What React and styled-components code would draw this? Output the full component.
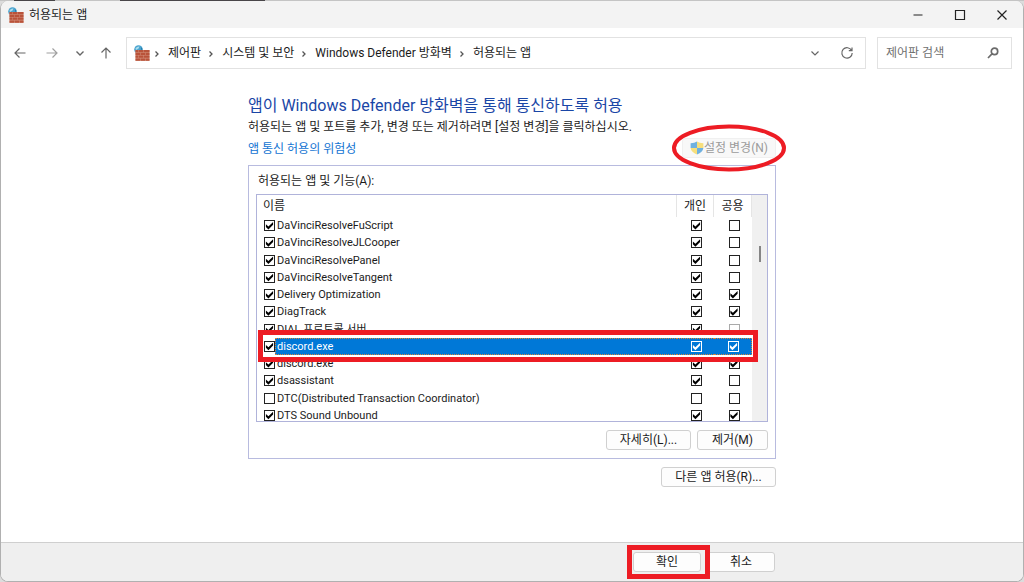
import React, { useState } from "react";
import styled, { createGlobalStyle, css } from "styled-components";

const GlobalStyle = createGlobalStyle`
	* {
		box-sizing: border-box;
	}
	body {
		margin: 0;
		background: #dcdcdc;
		font-family: Roboto, "Noto Sans CJK KR", sans-serif;
		font-size: 12px;
		line-height: 18px;
		color: #1b1b1b;
	}
	button,
	input {
		font: inherit;
		color: inherit;
	}
`;

const RED = "#ed1c24";

const Desktop = styled.div`
	min-height: 100vh;
	display: flex;
	padding: 1px 0 0;
	background: linear-gradient(
			90deg,
			#c4c4c4 14px,
			#484548 14px 55px,
			#c4c4c4 55px 120px,
			#484548 120px 265px,
			#c4c4c4 265px
		)
		top / 100% 1px no-repeat #dcdcdc;
`;

const Window = styled.div`
	flex: 1;
	display: flex;
	flex-direction: column;
	background: #fff;
	border: 1px solid #b0b0b0;
	border-top: 0;
	border-radius: 8px;
	overflow: hidden;
`;

const TitleBar = styled.header`
	display: flex;
	align-items: center;
	height: 27px;
	padding-left: 7px;
	background: #f3f3f3;
`;

const WindowTitle = styled.h1`
	flex: 1;
	margin: 0 0 0 5px;
	font-size: 12px;
	font-weight: 400;
`;

const CaptionButton = styled.button`
	display: flex;
	align-items: center;
	justify-content: center;
	width: 42px;
	height: 27px;
	padding: 0;
	border: 0;
	background: none;
	color: #222;
`;

const Toolbar = styled.nav`
	display: flex;
	align-items: center;
	height: 50px;
	padding: 0 11px 0 5px;
`;

const NavButton = styled.button`
	display: flex;
	align-items: center;
	justify-content: center;
	width: ${(props) => (props.$narrow ? "20px" : "28px")};
	height: 28px;
	margin-right: ${(props) => (props.$narrow ? "2px" : "4px")};
	padding: 0;
	border: 0;
	background: none;
	color: ${(props) => (props.disabled ? "#a0a0a0" : "#666")};
`;

const AddressBar = styled.div`
	flex: 1;
	display: flex;
	align-items: center;
	height: 32px;
	margin: 0 11px 0 2px;
	padding: 0 0 0 7px;
	border: 1px solid #e2e2e2;
`;

const Crumbs = styled.ol`
	flex: 1;
	display: flex;
	margin: 0 0 0 -3px;
	padding: 0;
	list-style: none;
`;

const Crumb = styled.li`
	display: flex;
	align-items: center;
`;

const CrumbLink = styled.a`
	color: #1b1b1b;
	text-decoration: none;
`;

const CrumbArrow = styled.svg`
	width: 6px;
	height: 8px;
	margin: 1px 8px 0 7px;
`;

const SearchBox = styled.label`
	display: flex;
	align-items: center;
	width: 135px;
	height: 32px;
	padding: 0 11px 0 8px;
	border: 1px solid #e2e2e2;
	color: #6b6b6b;
`;

const SearchInput = styled.input`
	flex: 1;
	min-width: 0;
	padding: 0;
	border: 0;
	outline: 0;
	background: none;
	&::placeholder {
		color: #707070;
	}
`;

const Content = styled.main`
	flex: 1;
	width: 100%;
	max-width: 528px;
	margin: 0 auto;
	padding: 16px 0 24px;
`;

const Heading = styled.h2`
	margin: 0;
	font-size: 16px;
	font-weight: 400;
	line-height: 24px;
	color: #1a46a6;
`;

const Description = styled.p`
	margin: 0;
`;

const LinkRow = styled.div`
	display: flex;
	align-items: flex-end;
	justify-content: space-between;
	margin: 2px 0 7px;
`;

const HelpLink = styled.a`
	color: #1273d2;
	text-decoration: none;
`;

const PushButton = styled.button`
	display: inline-flex;
	align-items: center;
	justify-content: center;
	width: ${(props) => props.$width};
	height: 20px;
	padding: 0;
	border: 1px solid #d0d0d0;
	border-radius: 3px;
	background: #fdfdfd;
	line-height: 18px;
	white-space: nowrap;
	&:disabled {
		border-color: #f0f0f0;
		background: #f8f8f8;
		color: #9b9b9b;
	}
`;

const Marked = styled.div`
	position: relative;
	display: flex;
`;

const EllipseMark = styled.svg`
	position: absolute;
	top: -14px;
	left: -11px;
	width: 116px;
	height: 48px;
	pointer-events: none;
`;

const BoxMark = styled.span`
	position: absolute;
	inset: -7px -9px -7px -6px;
	border: 5px solid ${RED};
	pointer-events: none;
`;

const RowMark = styled.span`
	position: absolute;
	z-index: -1;
	inset: -8px -6px -7px 1px;
	border: 5px solid ${RED};
	background: #fff;
	pointer-events: none;
`;

const Panel = styled.section`
	padding: 6px 7px 8px;
	border: 1px solid #b8bbdf;
`;

const PanelTitle = styled.h3`
	margin: 0 0 4px 2px;
	font-size: 12px;
	font-weight: 400;
`;

const ListBox = styled.div`
	display: flex;
	height: 228px;
	border: 1px solid #b0b3da;
	overflow: hidden;
`;

const AppTable = styled.table`
	flex: 1;
	height: 229px;
	border-collapse: separate;
	border-spacing: 0;
	table-layout: fixed;
`;

const HeadCell = styled.th`
	width: ${(props) => props.$width};
	height: 22px;
	padding: 0 ${(props) => (props.$name ? "6px" : "0")};
	border-right: 1px solid #e5e5e5;
	font-weight: 400;
	line-height: 18px;
	text-align: ${(props) => (props.$name ? "left" : "center")};
`;

const selectedFill = css`
	background: #0078d7;
	color: #fff;
	border: 0 dotted #d8843a;
	border-width: 1px 0;
`;

const Row = styled.tr`
	position: relative;
	z-index: ${(props) => (props.$selected ? 1 : "auto")};
`;

const NameCell = styled.td`
	height: 17px;
	padding: 0 0 0 7px;
`;

const NameLine = styled.div`
	display: flex;
	align-items: center;
`;

const AppName = styled.label`
	flex: 1;
	height: 17px;
	padding-left: 2px;
	font-size: 11px;
	line-height: 17px;
	white-space: nowrap;
	${(props) =>
		props.$selected &&
		css`
			${selectedFill}
			border-left-width: 1px;
			padding-left: 1px;
			line-height: 15px;
		`}
`;

const CheckCell = styled.td`
	height: 17px;
	padding: 0;
`;

const CheckFill = styled.div`
	display: flex;
	align-items: center;
	justify-content: center;
	height: 17px;
	padding-left: 2px;
	${(props) => props.$selected && selectedFill}
	${(props) => props.$last && "border-right-width: 1px;"}
`;

const Tick = styled.input.attrs({ type: "checkbox" })`
	appearance: none;
	flex: none;
	display: grid;
	width: 11px;
	height: 11px;
	margin: 0;
	border: 1px solid ${(props) => (props.$light ? "#fff" : "#222")};
	background: transparent;
	&:disabled {
		border-color: #aaa;
	}
	&:checked::before {
		content: "";
		background: ${(props) => (props.$light ? "#fff" : "#000")};
		clip-path: polygon(
			10% 35%,
			38% 60%,
			90% 10%,
			90% 40%,
			38% 92%,
			10% 65%
		);
	}
`;

const ScrollTrack = styled.div`
	display: flex;
	justify-content: center;
	width: 15px;
	padding-top: 51px;
	background: #f0f0f0;
`;

const ScrollThumb = styled.div`
	width: 2px;
	height: 16px;
	background: #858585;
`;

const ButtonRow = styled.div`
	display: flex;
	justify-content: flex-end;
	gap: 6px;
	margin-top: 8px;
`;

const Footer = styled.footer`
	border-top: 1px solid #cfcfcf;
	background: #efefef;
`;

const FooterInner = styled.div`
	display: flex;
	justify-content: flex-end;
	gap: 6px;
	max-width: 528px;
	margin: 0 auto;
	padding: 9px 1px 9px 0;
`;

const FirewallIcon = () => (
	<svg width="16" height="16" viewBox="0 0 16 16" aria-hidden="true">
		<circle cx="4.5" cy="4.5" r="4.3" fill="#4aa3cf" />
		<path d="M1.500 3.200Q3.500 1 5.500 1.600L4.600 3.600 2 5z" fill="#a9dcec" />
		<path d="M7 2.200 8.600 4 7 5z" fill="#237ba8" />
		<rect x="1.500" y="5" width="14" height="10.800" fill="#d38f7a" />
		<g fill="#b9533a">
			<path d="M1.500 5h3v2.200h-3zM5 5h4.500v2.200H5zM10 5h5.500v2.200H10z" />
			<path d="M1.500 7.800h5V10h-5zM7 7.800h4.500V10H7zM12 7.800h3.500V10H12z" />
			<path d="M1.500 10.600h3v2.200h-3zM5 10.600h4.500v2.200H5zM10 10.600h5.500v2.200H10z" />
			<path d="M1.500 13.400h5v2.400h-5zM7 13.400h4.500v2.400H7zM12 13.400h3.500v2.400H12z" />
		</g>
	</svg>
);

const ShieldIcon = () => (
	<svg width="14" height="14" viewBox="0 0 14 14" aria-hidden="true">
		<path d="M7 .5Q4.500 2.200 .6 2.200V7H7z" fill="#6fb1e0" />
		<path d="M7 .5Q9.500 2.200 13.400 2.200V7H7z" fill="#f7df7c" />
		<path d="M.6 7H7v6.600Q1.200 11.300 .6 7z" fill="#f7df7c" />
		<path d="M13.400 7H7v6.600Q12.800 11.300 13.400 7z" fill="#6fb1e0" />
	</svg>
);

const LineIcon = ({ d, size = 14, width = 1.2 }) => (
	<svg
		width={size}
		height={size}
		viewBox="0 0 14 14"
		fill="none"
		stroke="currentColor"
		strokeWidth={width}
		aria-hidden="true"
	>
		<path d={d} />
	</svg>
);

const crumbs = ["제어판", "시스템 및 보안", "Windows Defender 방화벽", "허용되는 앱"];

const initialApps = [
	{ name: "DaVinciResolveFuScript", on: true, home: true, open: false },
	{ name: "DaVinciResolveJLCooper", on: true, home: true, open: false },
	{ name: "DaVinciResolvePanel", on: true, home: true, open: false },
	{ name: "DaVinciResolveTangent", on: true, home: true, open: false },
	{ name: "Delivery Optimization", on: true, home: true, open: true },
	{ name: "DiagTrack", on: true, home: true, open: true },
	{ name: "DIAL 프로토콜 서버", on: true, home: true, open: false, locked: true },
	{ name: "discord.exe", on: true, home: true, open: true, selected: true },
	{ name: "discord.exe", on: true, home: true, open: true },
	{ name: "dsassistant", on: true, home: true, open: false },
	{
		name: "DTC(Distributed Transaction Coordinator)",
		on: false,
		home: false,
		open: false,
	},
	{ name: "DTS Sound Unbound", on: true, home: true, open: true },
];

function AppRow({ app, id, onToggle }) {
	const { selected } = app;

	return (
		<Row $selected={selected}>
			<NameCell>
				{selected && <RowMark />}
				<NameLine>
					<Tick
						id={id}
						checked={app.on}
						onChange={() => onToggle("on")}
					/>
					<AppName htmlFor={id} $selected={selected}>
						{app.name}
					</AppName>
				</NameLine>
			</NameCell>
			<CheckCell>
				<CheckFill $selected={selected}>
					<Tick
						aria-label={`${app.name} 개인`}
						checked={app.home}
						onChange={() => onToggle("home")}
						$light={selected}
					/>
				</CheckFill>
			</CheckCell>
			<CheckCell>
				<CheckFill $selected={selected} $last>
					<Tick
						aria-label={`${app.name} 공용`}
						checked={app.open}
						disabled={app.locked}
						onChange={() => onToggle("open")}
						$light={selected}
					/>
				</CheckFill>
			</CheckCell>
		</Row>
	);
}

function App() {
	const [apps, setApps] = useState(initialApps);

	const toggle = (index, key) => {
		setApps(
			apps.map((app, i) =>
				i === index ? { ...app, [key]: !app[key] } : app
			)
		);
	};

	return (
		<Desktop>
			<GlobalStyle />
			<Window>
				<TitleBar>
					<FirewallIcon />
					<WindowTitle>허용되는 앱</WindowTitle>
					<CaptionButton aria-label="최소화">
						<LineIcon d="M2.500 7h9" />
					</CaptionButton>
					<CaptionButton aria-label="최대화">
						<LineIcon d="M2.500 2.500h9v9h-9z" />
					</CaptionButton>
					<CaptionButton aria-label="닫기">
						<LineIcon d="M2.500 2.500l9 9M11.500 2.500l-9 9" />
					</CaptionButton>
				</TitleBar>
				<Toolbar>
					<NavButton aria-label="뒤로">
						<LineIcon d="M12.500 7H2M6.500 2.500 2 7l4.500 4.500" />
					</NavButton>
					<NavButton aria-label="앞으로" disabled>
						<LineIcon d="M1.500 7H12M7.500 2.500 12 7l-4.500 4.500" />
					</NavButton>
					<NavButton aria-label="최근 위치" $narrow>
						<LineIcon d="M3.500 5.500 7 9l3.500-3.500" width={1.4} />
					</NavButton>
					<NavButton aria-label="위로">
						<LineIcon d="M7 12.500V2M2.500 6.500 7 2l4.500 4.500" />
					</NavButton>
					<AddressBar>
						<FirewallIcon />
						<Crumbs>
							{crumbs.map((crumb) => (
								<Crumb key={crumb}>
									<CrumbArrow
										viewBox="0 0 6 8"
										fill="none"
										stroke="#555"
										strokeWidth="1.3"
									>
										<path d="M1.500 1.500 4 4 1.500 6.500" />
									</CrumbArrow>
									<CrumbLink href="#">{crumb}</CrumbLink>
								</Crumb>
							))}
						</Crumbs>
						<NavButton aria-label="이전 위치">
							<LineIcon d="M3.500 5.500 7 9l3.500-3.500" />
						</NavButton>
						<NavButton aria-label="새로 고침">
							<LineIcon d="M11.600 4.500A5.200 5.200 0 1 0 12.200 7M12 1.500v3.200H8.800" />
						</NavButton>
					</AddressBar>
					<SearchBox>
						<SearchInput
							type="search"
							aria-label="제어판 검색"
							placeholder="제어판 검색"
						/>
						<LineIcon
							d="M8.500 2.200a3.200 3.200 0 1 1 0 6.400a3.200 3.200 0 1 1 0-6.400M6.200 7.700 2 12"
							width={1.7}
						/>
					</SearchBox>
				</Toolbar>
				<Content>
					<Heading>
						앱이 Windows Defender 방화벽을 통해 통신하도록 허용
					</Heading>
					<Description>
						허용되는 앱 및 포트를 추가, 변경 또는 제거하려면 [설정
						변경]을 클릭하십시오.
					</Description>
					<LinkRow>
						<HelpLink href="#">앱 통신 허용의 위험성</HelpLink>
						<Marked>
							<PushButton $width="94px" disabled>
								<ShieldIcon />
								설정 변경(N)
							</PushButton>
							<EllipseMark viewBox="0 0 116 48">
								<ellipse
									cx="58"
									cy="24"
									rx="55"
									ry="21.5"
									fill="none"
									stroke={RED}
									strokeWidth="4"
								/>
							</EllipseMark>
						</Marked>
					</LinkRow>
					<Panel>
						<PanelTitle>허용되는 앱 및 기능(A):</PanelTitle>
						<ListBox>
							<AppTable>
								<thead>
									<tr>
										<HeadCell $name>이름</HeadCell>
										<HeadCell $width="37px">개인</HeadCell>
										<HeadCell $width="38px">공용</HeadCell>
									</tr>
								</thead>
								<tbody>
									{apps.map((app, index) => (
										<AppRow
											key={index}
											id={`app-${index}`}
											app={app}
											onToggle={(key) =>
												toggle(index, key)
											}
										/>
									))}
								</tbody>
							</AppTable>
							<ScrollTrack>
								<ScrollThumb />
							</ScrollTrack>
						</ListBox>
						<ButtonRow>
							<PushButton $width="85px">자세히(L)...</PushButton>
							<PushButton $width="71px">제거(M)</PushButton>
						</ButtonRow>
					</Panel>
					<ButtonRow>
						<PushButton $width="115px">
							다른 앱 허용(R)...
						</PushButton>
					</ButtonRow>
				</Content>
				<Footer>
					<FooterInner>
						<Marked>
							<PushButton $width="68px">확인</PushButton>
							<BoxMark />
						</Marked>
						<PushButton $width="68px">취소</PushButton>
					</FooterInner>
				</Footer>
			</Window>
		</Desktop>
	);
}

export default App;
